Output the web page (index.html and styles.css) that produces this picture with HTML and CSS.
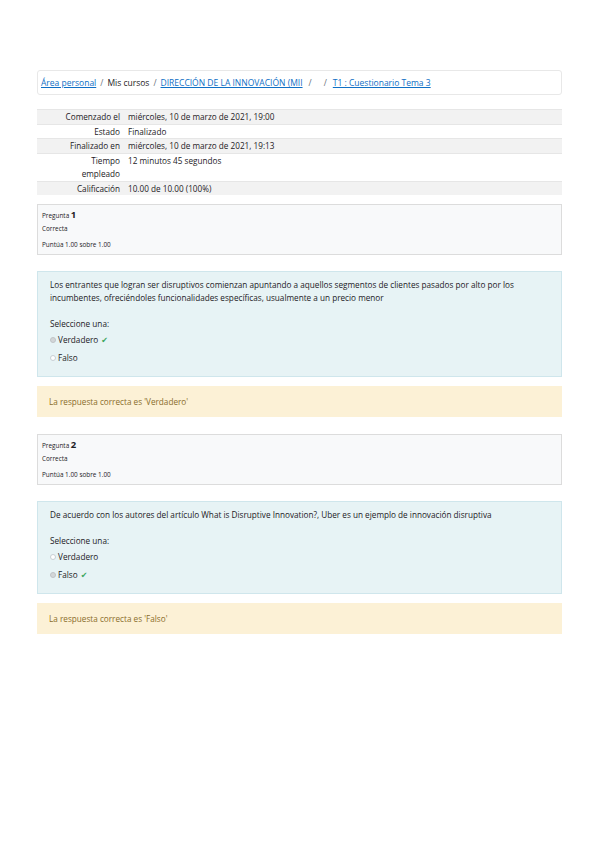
FILE: index.html
```html
<!DOCTYPE html>
<html lang="es">
<head>
<meta charset="utf-8">
<link rel="stylesheet" href="styles.css">
</head>
<body>
<div class="page">
  <nav class="crumbs">
    <a href="#">Área personal</a><span class="sep">/</span><span>Mis cursos</span><span class="sep">/</span><a href="#">DIRECCIÓN DE LA INNOVACIÓN (MII</a><span class="sep wide">/</span><span class="sep wide">/</span><a href="#">T1 : Cuestionario Tema 3</a>
  </nav>

  <table class="summary">
    <tr><th>Comenzado el</th><td>miércoles, 10 de marzo de 2021, 19:00</td></tr>
    <tr><th>Estado</th><td>Finalizado</td></tr>
    <tr><th>Finalizado en</th><td>miércoles, 10 de marzo de 2021, 19:13</td></tr>
    <tr><th>Tiempo<br>empleado</th><td>12 minutos 45 segundos</td></tr>
    <tr><th>Calificación</th><td>10.00 de 10.00 (100%)</td></tr>
  </table>

  <div class="info first">
    <div class="qno">Pregunta <b>1</b></div>
    <div class="state">Correcta</div>
    <div class="grade">Puntúa 1.00 sobre 1.00</div>
  </div>
  <div class="content">
    <p class="qtext">Los entrantes que logran ser disruptivos comienzan apuntando a aquellos segmentos de clientes pasados por alto por los incumbentes, ofreciéndoles funcionalidades específicas, usualmente a un precio menor</p>
    <div class="prompt">Seleccione una:</div>
    <div class="opt"><span class="radio on"></span>Verdadero <span class="check">✔</span></div>
    <div class="opt"><span class="radio"></span>Falso</div>
  </div>
  <div class="feedback">La respuesta correcta es 'Verdadero'</div>

  <div class="info">
    <div class="qno">Pregunta <b>2</b></div>
    <div class="state">Correcta</div>
    <div class="grade">Puntúa 1.00 sobre 1.00</div>
  </div>
  <div class="content">
    <p class="qtext">De acuerdo con los autores del artículo What is Disruptive Innovation?, Uber es un ejemplo de innovación disruptiva</p>
    <div class="prompt">Seleccione una:</div>
    <div class="opt"><span class="radio"></span>Verdadero</div>
    <div class="opt"><span class="radio on"></span>Falso <span class="check">✔</span></div>
  </div>
  <div class="feedback">La respuesta correcta es 'Falso'</div>
</div>
</body>
</html>
```

FILE: styles.css
```css
html, body { margin: 0; padding: 0; background: #fff; }
body { font-family: "Open Sans", "DejaVu Sans", sans-serif; color: #1d2125; font-size: 8.2px; letter-spacing: 0; }
.page { margin: 70px 0 0 37px; width: 525px; }

.crumbs { border: 1px solid #e8e8e8; border-radius: 3px; height: 25px; box-sizing: border-box; padding: 0 3px; display: flex; align-items: center; font-size: 8.5px; }
.crumbs a { color: #0f6fc5; text-decoration: underline; }
.crumbs .sep { color: #6a737b; margin: 0 4px; }
.crumbs .sep.wide { margin: 0 6px; }

.summary { margin-top: 14px; width: 100%; border-collapse: collapse; }
.summary tr:nth-child(odd) { background: #f2f2f2; }
.summary th, .summary td { border-top: 1px solid #e6e6e6; padding: 0 3px; vertical-align: top; line-height: 13.5px; font-weight: normal; }
.summary th { width: 80px; text-align: right; padding-right: 6px; }
.summary td { padding-left: 2px; }

.info { margin-top: 17px; border: 1px solid #dcdcdc; background: #f8f9fa; height: 51px; box-sizing: border-box; padding: 5px 4px; font-size: 6.4px; }
.info.first { margin-top: 9px; }
.qno { line-height: 9px; }
.qno b { font-size: 9.5px; font-weight: bold; }
.state { margin-top: 5px; line-height: 8px; }
.grade { margin-top: 8px; line-height: 8px; }

.content { margin-top: 16px; background: #e7f3f5; border: 1px solid #cfe6ec; box-sizing: border-box; padding: 6px 12px 13px; }
.qtext { margin: 0; line-height: 13px; }
.prompt { margin-top: 14px; line-height: 11px; }
.opt { display: flex; align-items: center; line-height: 11px; margin-top: 5px; }
.opt + .opt { margin-top: 7px; }
.radio { width: 6px; height: 6px; border-radius: 50%; border: 1px solid #c8cfd4; background: #fff; box-sizing: border-box; margin-right: 2px; }
.radio.on { background: #d3d6d8; border-color: #c0c4c7; }
.check { color: #3ba55c; margin-left: 3px; font-size: 8px; }

.feedback { margin-top: 9px; background: #fcf1d6; color: #8a6d2b; height: 31px; box-sizing: border-box; padding: 0 12px; display: flex; align-items: center; }
```
